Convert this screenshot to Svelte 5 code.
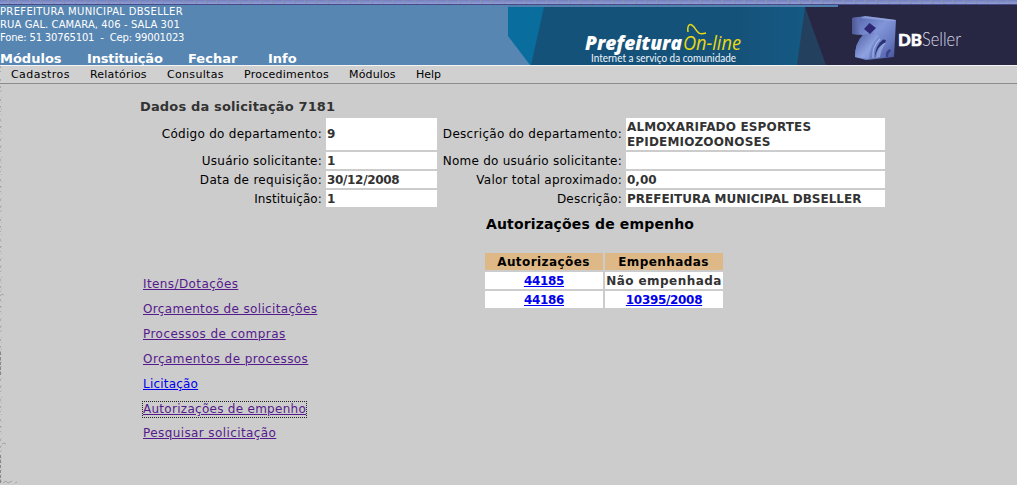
<script>
  const addressLines = [
    { text: 'PREFEITURA MUNICIPAL DBSELLER', spacing: 0.34 },
    { text: 'RUA GAL. CAMARA, 406 - SALA 301', spacing: 0.09 },
    { text: 'Fone: 51 30765101\u00a0 -\u00a0 Cep: 99001023', spacing: -0.18 }
  ];
  const modules = [
    { label: 'Módulos', width: 87 },
    { label: 'Instituição', width: 101, spacing: -0.2 },
    { label: 'Fechar', width: 80 },
    { label: 'Info', width: 60 }
  ];
  const menu = [
    { label: 'Cadastros', width: 79, spacing: 0.44 },
    { label: 'Relatórios', width: 77, spacing: 0.2 },
    { label: 'Consultas', width: 77, spacing: 0.33 },
    { label: 'Procedimentos', width: 105, spacing: 0.26 },
    { label: 'Módulos', width: 67, spacing: 0.15 },
    { label: 'Help', width: 40, spacing: 0 }
  ];
  const fields = [
    ['Código do departamento:', 0.27], ['9', 0], ['Descrição do departamento:', 0.3], ['ALMOXARIFADO ESPORTES EPIDEMIOZOONOSES', 0.16],
    ['Usuário solicitante:', 0.24], ['1', 0], ['Nome do usuário solicitante:', 0.25], ['', 0],
    ['Data de requisição:', 0.28], ['30/12/2008', -0.33], ['Valor total aproximado:', 0.23], ['0,00', 0],
    ['Instituição:', 0.12], ['1', 0], ['Descrição:', 0.2], ['PREFEITURA MUNICIPAL DBSELLER', -0.01]
  ];
  const links = [
    ['Itens/Dotações', 0.4], ['Orçamentos de solicitações', 0.34], ['Processos de compras', 0.46],
    ['Orçamentos de processos', 0.43], ['Licitação', 0.2], ['Autorizações de empenho', 0.28], ['Pesquisar solicitação', 0.4]
  ];
</script>

<div class="page">
  <div class="strip"></div>
  <header>
    <div class="identity">
      <address>
        {#each addressLines as line}<span style:letter-spacing="{line.spacing}px">{line.text}</span>{/each}
      </address>
      <nav class="modules">
        {#each modules as m}<span style:width="{m.width}px" style:letter-spacing="{m.spacing ?? 0}px">{m.label}</span>{/each}
      </nav>
    </div>
    <svg class="banner" width="509" height="60" viewBox="508 5 509 60">
      <defs>
        <linearGradient id="sea"><stop offset="0" stop-color="#15527a" /><stop offset=".75" stop-color="#15527a" /><stop offset="1" stop-color="#145a84" /></linearGradient>
        <linearGradient id="face" x1="0" y1="0" x2="1" y2="1"><stop offset="0" stop-color="#4f5da8" /><stop offset=".45" stop-color="#8196d8" /><stop offset=".75" stop-color="#6576bd" /><stop offset="1" stop-color="#434e96" /></linearGradient>
        <linearGradient id="side" x1="0" y1="0" x2="1" y2="0"><stop offset="0" stop-color="#4c5796" /><stop offset="1" stop-color="#6674b3" /></linearGradient>
        <linearGradient id="stem" x1="0" y1="0" x2="1" y2="1"><stop offset="0" stop-color="#4a589f" /><stop offset=".6" stop-color="#8ea2e0" /><stop offset="1" stop-color="#7485c8" /></linearGradient>
      </defs>
      <path d="M508 7H546V65H530L508 36Z" fill="#096d9e" />
      <path d="M544 7H808V65H531Z" fill="url(#sea)" />
      <path d="M805 7L797 65H830Z" fill="#24405f" />
      <path d="M805 7H838V5H1017V65H826Z" fill="#272744" />
      <path d="M508 5H838V7H508Z" fill="#5080ae" />
      <text x="585" y="50" class="brand" textLength="97" lengthAdjust="spacingAndGlyphs">Prefeitura</text>
      <text x="683" y="50" class="online" textLength="58" lengthAdjust="spacingAndGlyphs">On-line</text>
      <path d="M688 32C687 25 690 22 694 27C698 33 699 35 706 33" fill="none" stroke="#e9d910" stroke-width="1.5" />
      <text x="591" y="62" class="tagline" textLength="145" lengthAdjust="spacingAndGlyphs">Internet a serviço da comunidade</text>
      <path d="M852 18L865 16L896 20L894 57L866 60L855 57Q855 43 863 35L852 34Z" fill="url(#face)" />
      <path d="M852 18L859 17V34.500L852 34Z" fill="url(#side)" />
      <path d="M865 16L896 20L893 21L860 18Z" fill="#a2b1e3" opacity=".6" />
      <path d="M863 35L873 32L879 36Q870 44 869 59L855 57Q855 43 863 35Z" fill="url(#stem)" />
      <path d="M864 29L869.500 23L876 28L870 34Z" fill="#2f2772" />
      <path d="M875 57Q875 46 883 39.500L886 40L885 43Q877 46 875 57Z" fill="#2d3275" />
      <path d="M876 58Q877 48 884 43L886 43Q881 49 880 57Z" fill="#8e9fdc" />
      <path d="M886 57Q885 51 890 49L891 51Q888 53 888 57Z" fill="#39428b" />
      <path d="M873 58Q872 46 880 39" fill="none" stroke="#9fb2e8" stroke-width="1.2" />
      <text x="898" y="46" class="db" textLength="24" lengthAdjust="spacingAndGlyphs">DB</text>
      <text x="922" y="46" class="seller" textLength="39" lengthAdjust="spacingAndGlyphs">Seller</text>
    </svg>
  </header>
  <nav class="menu">
    {#each menu as m}<span style:width="{m.width}px" style:letter-spacing="{m.spacing}px">{m.label}</span>{/each}
  </nav>
  <main>
    <h1>Dados da solicitação 7181</h1>
    <div class="fields">
      {#each fields as [text, spacing], i}
        <div class={i % 2 ? 'value' : 'label'} style:letter-spacing="{spacing}px">{text}</div>
      {/each}
    </div>
    <div class="lower">
      <nav class="links">
        {#each links as [text, spacing], i}
          <a href="#{i}" class:unvisited={i === 4} class:focused={i === 5} style:letter-spacing="{spacing}px">{text}</a>
        {/each}
      </nav>
      <section>
        <h2>Autorizações de empenho</h2>
        <div class="grants">
          <b class="head">Autorizações</b><b class="head">Empenhadas</b>
          <b><a href="#44185">44185</a></b><b class="plain">Não empenhada</b>
          <b><a href="#44186">44186</a></b><b><a href="#10395">10395/2008</a></b>
        </div>
      </section>
    </div>
  </main>
  <svg class="edge" width="18" height="420" viewBox="0 65 18 420">
    <path d="M.5 66V485" stroke="#aaa" stroke-dasharray="2 3 1 7 2 5" />
    <path d="M1.5 90V485" stroke="#b4b4b4" stroke-dasharray="1 6 1 4" />
    <path d="M.5 352V376M.5 455V485" stroke="#888" stroke-dasharray="3 2" />
    <path d="M0 296L2 294L4 295M2 444L4 443L6 444M3 483L6 481L8 483L12 481M15 483L17 482" fill="none" stroke="#999" stroke-width=".8" />
  </svg>
</div>

<style>
  :global(body) { margin: 0; overflow: hidden; }
  .page { position: relative; width: 1017px; height: 485px; overflow: hidden; background: #ccc; font-family: "DejaVu Sans", sans-serif; font-size: 12px; color: #000; }
  .strip { height: 5px; box-sizing: border-box; border-bottom: 1px solid #484989; background: repeating-linear-gradient(55deg, transparent 0 8px, #8a8fac 8px 9px), linear-gradient(#7280bd, #929ed5); }
  header { display: flex; justify-content: space-between; height: 60px; background: #5786b2; color: #fff; }
  .identity { width: 508px; }
  address { display: flex; flex-direction: column; height: 45px; font-style: normal; font-size: 10px; line-height: 13px; white-space: nowrap; }
  .modules { display: flex; font-size: 13px; font-weight: bold; line-height: 17px; white-space: nowrap; }
  .banner { display: block; }
  .brand { font: italic 800 20px "Open Sans", sans-serif; fill: #fff; }
  .online { font: italic 400 20px "Open Sans", sans-serif; fill: #e9d910; }
  .tagline { font: 10.5px Lato, sans-serif; fill: #eef5fa; }
  .db { font: 900 17px Lato, sans-serif; fill: #fff; stroke: #fff; stroke-width: .5px; }
  .seller { font: 300 19px Lato, sans-serif; fill: #d9d9e5; }
  .menu { display: flex; height: 19px; box-sizing: border-box; border-top: 1px solid #f4f4f4; border-bottom: 1px solid #8c8c8c; padding-left: 11px; background: #d0d0d0; font-size: 11px; line-height: 17px; white-space: nowrap; }
  main { padding: 15px 0 0 140px; }
  h1, h2 { margin: 0; font-size: 13px; line-height: 15px; }
  h1 { height: 19px; color: #333; letter-spacing: .15px; }
  .fields { display: grid; width: 745px; grid-template-columns: 186px 111px 189px 259px; grid-template-rows: 32px 17px 17px 17px; row-gap: 2px; }
  .label, .value { display: flex; align-items: center; line-height: 15px; padding-top: 1px; box-sizing: border-box; }
  .label { justify-content: flex-end; padding-right: 4px; white-space: nowrap; }
  .value { padding-left: 1px; background: #fff; color: #333; font-weight: bold; }
  .lower { display: flex; }
  .links { display: flex; flex-direction: column; align-items: flex-start; gap: 10px; width: 345px; padding: 70px 0 0 3px; box-sizing: border-box; }
  a { color: #00e; }
  .links a { color: #551a8b; line-height: 15px; white-space: nowrap; text-underline-offset: 1px; }
  .links a:last-child { margin-top: -1px; }
  .links .unvisited { color: #00e; }
  .focused { outline: 1px dotted #222; }
  section { width: 240px; padding-top: 10px; }
  h2 { font-size: 14px; height: 36px; padding-left: 1px; white-space: nowrap; letter-spacing: .15px; }
  .grants { display: grid; grid-template-columns: 118px 118px; gap: 2px; }
  .grants b { height: 17px; line-height: 19px; background: #fff; text-align: center; white-space: nowrap; }
  .grants a { letter-spacing: -.32px; }
  .grants .head { background: #deb887; letter-spacing: .42px; padding-right: 1px; box-sizing: border-box; }
  .grants .plain { color: #333; letter-spacing: .45px; }
  .edge { position: absolute; left: 0; top: 65px; }
</style>
